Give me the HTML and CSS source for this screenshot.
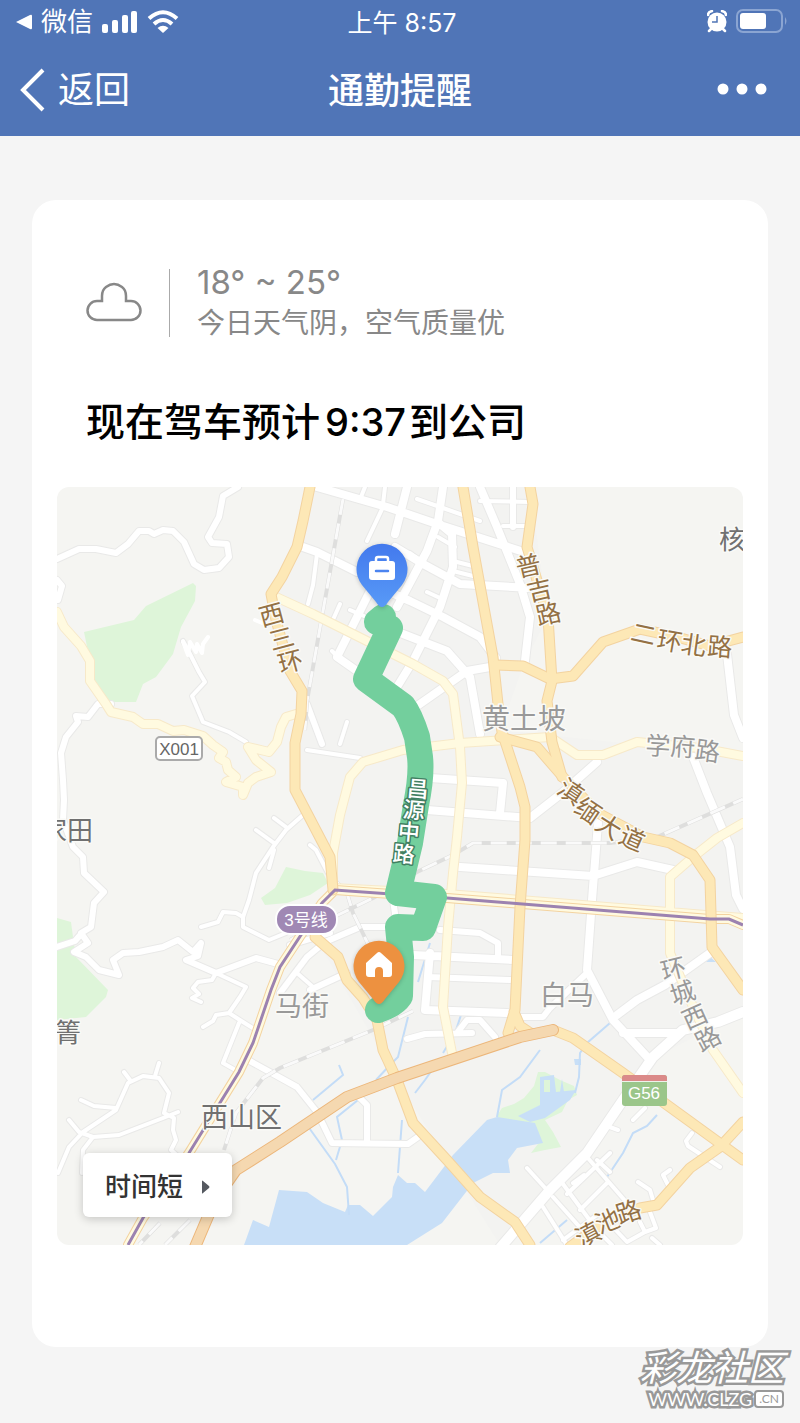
FILE: index.html
```html
<!DOCTYPE html>
<html lang="zh-CN">
<head>
    <meta charset="UTF-8">
    <meta name="viewport" content="width=device-width, initial-scale=1.0">
    <title>通勤提醒</title>
    <link rel="stylesheet" href="styles.css">
</head>
<body>
    <header class="header">
        <div class="status-bar">
            <div class="status-left">
                <svg width="16" height="16" viewBox="0 0 16 16"><path d="M0 8L14 1Q16 0 16 2V14Q16 16 14 15Z" fill="#fff"/></svg>
                <span class="status-app">微信</span>
                <svg class="signal" width="36" height="24" viewBox="0 0 36 24" fill="#fff">
                    <rect x="0" y="14" width="6" height="9" rx="2"/>
                    <rect x="10" y="10" width="6" height="13" rx="2"/>
                    <rect x="20" y="5" width="6" height="18" rx="2"/>
                    <rect x="29" y="1" width="6" height="22" rx="2"/>
                </svg>
                <svg width="32" height="24" viewBox="0 0 32 24" fill="none" stroke="#fff" stroke-width="4">
                    <path d="M2 8.500Q16 -4 30 8.500"/>
                    <path d="M7 14Q16 6 25 14"/>
                    <path d="M16 23L10.500 18Q16 13.500 21.500 18Z" fill="#fff" stroke="none"/>
                </svg>
            </div>
            <div class="status-time">上午 8:57</div>
            <div class="status-right">
                <svg width="20" height="24" viewBox="0 0 20 24">
                    <circle cx="10" cy="12" r="9.500" fill="#fff"/>
                    <path d="M1 5Q1 2 5 1M19 5Q19 2 15 1M4 19L2 21M16 19L18 21" fill="none" stroke="#fff" stroke-width="2.500" stroke-linecap="round"/>
                    <path d="M10 6V12H5" fill="none" stroke="#5075b7" stroke-width="1.500"/>
                </svg>
                <svg width="52" height="26" viewBox="0 0 52 26">
                    <rect x="1" y="1" width="45" height="22" rx="6" fill="none" stroke="#8ba5d2" stroke-width="2"/>
                    <rect x="4" y="4" width="26" height="16" rx="3" fill="#fff"/>
                    <path d="M49 8Q52 12 49 16Z" fill="#8ba5d2"/>
                </svg>
            </div>
        </div>
        <nav class="nav-bar">
            <button class="back-btn" type="button">
                <svg width="25" height="44" viewBox="0 0 25 44"><path d="M23 2L3 22L23 42" fill="none" stroke="#fff" stroke-width="4"/></svg>
                返回
            </button>
            <h1 class="nav-title">通勤提醒</h1>
            <button class="more-btn" type="button" aria-label="更多">
                <svg width="50" height="12" viewBox="0 0 50 12" fill="#fff"><circle cx="6" cy="6" r="5.500"/><circle cx="25" cy="6" r="5.500"/><circle cx="44" cy="6" r="5.500"/></svg>
            </button>
        </nav>
    </header>

    <main class="content">
        <section class="card">
            <div class="weather">
                <svg class="cloud" width="56" height="68" viewBox="0 0 56 68"><path d="M11 32H16V27Q16 21 20 18Q24 15 28 15Q32 15 36 18Q40 21 40 27V32H45A9.500 9.500 0 0 1 45 51H11A9.500 9.500 0 0 1 11 32Z" fill="none" stroke="#888" stroke-width="2.500"/></svg>
                <div class="weather-info">
                    <p class="temperature">18° ~ 25°</p>
                    <p class="weather-desc">今日天气阴，空气质量优</p>
                </div>
            </div>
            <h2 class="eta">现在驾车预计<span class="eta-time">9:37</span>到公司</h2>

            <div class="map">
                <svg class="map-canvas" viewBox="57 487 686 758" role="img" aria-label="通勤路线">
                    <defs>
                        <g id="minor">
                            <path d="M183 641L190 654L199 672L205 682L192 696L203 722L229 732L246 742"/>
                            <path d="M201 927L218 922L223 912L236 913L243 917V927L269 940L286 933M243 917L249 900L256 873L273 847L286 830L303 815M256 830L274 843M274 818L286 827M274 850L269 868"/>
                            <path d="M58 1173L69 1147L83 1132L116 1110L128 1083L143 1076L159 1078L169 1093L164 1113L174 1118L173 1130L176 1140L171 1150L180 1158M81 1100L94 1106L116 1108M124 1072L130 1080M159 1063L155 1076M69 1120L79 1132L93 1137L119 1135L163 1118L178 1112M93 1137L83 1150L82 1173"/>
                            <path d="M216 973L212 980L198 982L193 988L199 994L192 998L201 1002M216 973L246 987L240 997L229 1013L216 1015L213 1021L203 1027M229 1013L243 1022L256 1030M239 1023L223 1063L239 1072"/>
                            <path d="M317 554L313 585L308 604M383 507L367 541M365 487L361 497M385 487L383 504M417 499L443 508L480 521M340 604L332 622M453 561L473 566M453 571L473 576M427 592L440 598M350 610L364 616M503 526H527M480 501L530 502M332 651L338 657M410 553L430 568M438 537L455 547"/>
                            <path d="M307 750L360 758M347 722L340 744M310 845L316 850L328 873M297 973L313 987"/>
                            <path d="M567 1194L610 1153M580 1210L607 1183M563 1240L597 1215M527 1168L547 1190M607 1126L618 1130M720 1167L688 1146L686 1141L692 1133M560 1180L597 1230L612 1245M587 1157L627 1203M543 1207L567 1245M553 1197L585 1233M638 1182L650 1190L653 1200M670 1170L663 1175L668 1185M612 1226L627 1242L645 1232L656 1228L650 1212M645 1232L640 1222M652 1238L660 1245M597 1160L610 1172M573 1183L584 1175M633 1120L645 1108"/>
                        </g>
                        <g id="local">
                            <path d="M57 559L79 549H96L116 553L128 544L139 531H149L154 534L163 530L173 531L184 542L194 564L204 570L219 568L229 557L227 544L212 543L208 537L219 517L223 496L238 487"/>
                            <path d="M57 580L62 586L58 600M111 704H98L88 717L76 716L78 722L66 737L61 753L63 780L64 800L63 820L73 847L83 857L84 873L104 892L94 903L91 927L81 933L88 943L74 952L86 957L99 970L119 975L113 960L123 953L139 952L163 947L178 940L193 952L201 943L198 956L186 960L216 973L256 958L278 964M57 947L75 941L82 933"/>
                            <path d="M248 1060L297 1087L317 1112L332 1143L408 1144L418 1137M367 1142V1105L360 1098"/>
                            <path d="M307 704L322 744M280 993L307 957L325 942L360 927H390M310 990L347 973M290 945L330 933M393 900L396 920"/>
                            <path d="M407 1039L425 1034L472 1033M457 1033L467 1020H480L495 1037M440 930L480 933L498 943V958M427 977L510 980M517 1017H543L550 1008L587 973"/>
                            <path d="M637 1033H673M513 487V527"/>
                        </g>
                        <g id="street">
                            <path d="M310 485L387 507L437 524L530 554M300 546L317 552L357 572M407 487L395 534M443 487L438 521L427 551L397 607M395 547L425 565L460 584L530 588M440 524L452 534L453 567L440 607L413 661L397 687M370 591L337 657L357 671M385 590L410 601L443 617L480 637L496 658M403 634L447 651L470 677L480 734M417 706L467 671L490 667M480 487L497 527L520 584L530 617L525 661"/>
                            <path d="M430 778L503 783L500 813M427 810L530 818L562 793L597 762M460 867L593 876L637 862L673 870M598 823L592 900L587 970L613 1020L650 1060M413 955L513 960M430 953L425 1010L507 1013M693 757L707 793L730 847L736 895L743 909M727 654L734 715L743 738"/>
                            <path d="M623 1033H675M710 953L665 985L637 1000L617 1015"/>
                        </g>
                        <g id="avenue">
                            <path d="M500 1248L550 1190L587 1153L623 1100L653 1057L683 1030L718 1022L743 1012"/>
                        </g>
                        <g id="pale">
                            <path d="M57 612L64 627L81 646L90 661V681L106 704L111 712L133 717L143 724H158L173 731L184 730L203 736L213 745L223 752L219 758L226 762L228 770L236 777L226 782L243 787V795L248 783L256 777L271 772L256 760L248 747L269 752L277 742L281 727L286 717L296 714"/>
                            <path d="M276 597L313 614L347 631L373 644L413 664L443 681L453 694L460 747L462 783L457 837L453 873L448 927L443 1007L452 1053"/>
                            <path d="M333 883V853L340 815L350 777L363 762L403 750L460 743L550 737L577 755H603L637 742L700 748L743 756"/>
                            <path d="M743 823L717 838L693 857L670 877L670 953L690 1000L713 1050L743 1093M333 888L447 894L743 918"/>
                        </g>
                        <g id="main-road">
                            <path d="M310 487L303 521L297 547L282 577L271 594L276 620L290 671L302 691L301 714L295 743V790L307 813L330 857L333 890M315 937L338 957L347 980L363 998L377 1020L383 1050L397 1080L413 1123L447 1160L480 1197L515 1222L530 1245"/>
                            <path d="M463 487L473 547L493 657L498 704L502 732L520 787L525 807V840L520 907L515 1010L508 1033M514 1012L520 1026L532 1034M530 487L533 504L527 547L548 617L552 681L547 701L552 742L562 777"/>
                            <path d="M500 737L537 747L563 777L598 813L643 837L670 843L693 855L710 880L712 947L743 990"/>
                            <path d="M496 665L523 666L550 679L573 676L603 642L640 629L677 637L710 646L743 637"/>
                            <path d="M553 1030L573 1038L623 1073L663 1102L743 1160M743 1122L720 1147L690 1168L657 1205L640 1208L600 1225L570 1247"/>
                        </g>
                        <g id="highway"><path d="M195 1247L215 1200L236 1170L280 1142L347 1097L397 1078L520 1037L553 1030"/></g>
                        <g id="railway"><path d="M343 499L323 611L307 701L305 730M290 940L338 915L375 897L417 872L453 855L473 843H610L657 837L743 799M413 1011L373 1030L280 1068L263 1078L236 1113L224 1150M328 873L347 893L353 913L370 948M160 1223L139 1245M190 1220L165 1245"/></g>
                        <path id="metro" d="M743 925L729 919H710L510 903L447 898L335 890L322 903L280 967L271 990L253 1043L239 1072L189 1153L143 1218L128 1245"/>
                        <linearGradient id="company-fill" x1="0" y1="0" x2="0" y2="1"><stop offset="0" stop-color="#4379ed"/><stop offset="1" stop-color="#589af7"/></linearGradient>
                    </defs>

                    <rect class="land" x="57" y="487" width="686" height="758"/>
                    <!-- city blocks -->
                    <path class="blocks" d="M310 487H530L548 617L525 661L500 730L743 756V1012L650 1060L587 1153L500 1245L447 1160L397 1080L315 937L335 890L295 790L302 691L276 597Z"/>

                    <!-- parks -->
                    <g class="park">
                        <path d="M84 632L134 620L146 606L193 583L196 586L195 601L181 627L173 654L156 677L143 684L136 702H109L90 681V661Z"/>
                        <path d="M57 918L71 922L73 937L76 957L108 990L106 997L86 1017L57 1020Z"/>
                        <path d="M261 898L275 888L286 867L305 871L323 873L328 883L310 895L287 903L265 905Z"/>
                        <path d="M496 1117L502 1108L514 1104L524 1098L534 1086L538 1072L545 1072L560 1080L574 1086L577 1095L568 1100L562 1112L545 1120L553 1132L561 1147L545 1150L531 1153L541 1140L515 1122Z"/>
                    </g>

                    <!-- lake and rivers -->
                    <g class="water">
                        <path d="M244 1245L253 1220L269 1227L279 1190L307 1192L323 1203L345 1212L348 1205H360L373 1216L392 1197L393 1187L398 1175L407 1183H415L425 1192L453 1155L487 1120L497 1117L535 1123L543 1143L517 1148L508 1160L510 1173L493 1173L473 1183L442 1223L407 1245Z"/>
                        <path fill-rule="evenodd" d="M518 1116L540 1105V1077L554 1075L556 1092L576 1090L570 1100L545 1118L530 1122ZM544 1080V1092H550V1080Z"/>
                        <path d="M562 1079L564 1092L560 1092ZM706 962L710 957L716 962ZM574 1059H581V1065H575Z"/>
                    </g>
                    <path class="river" d="M408 1017L398 1057L390 1065L376 1080M307 1125L335 1164L347 1187L349 1215M402 1120L398 1173M358 1100L337 1117L342 1140L336 1160M437 1063L425 1080L415 1093M610 1023L587 1043L580 1053L579 1077L575 1093M657 1115L647 1126L633 1133L623 1153L607 1177M540 1243L567 1220M430 943L418 982M339 1065L343 1075L313 1100M461 1015L455 1033L443 1053M497 1117L502 1090L520 1077L540 1050"/>

                    <!-- roads: casing first, then fill -->
                    <use href="#minor" class="road casing w6"/><use href="#local" class="road casing w8"/>
                    <use href="#street" class="road casing w10"/><use href="#avenue" class="road casing w12"/>
                    <use href="#minor" class="road white w4"/><use href="#local" class="road white w6"/>
                    <use href="#street" class="road white w8"/><use href="#avenue" class="road white w10"/>
                    <path class="road white w4" d="M183 642L188 655L190 642L196 652L197 644L202 653L203 644L208 637M255 620L262 623"/>
                    <use href="#railway" class="rail-bed"/><use href="#railway" class="rail-dash"/>
                    <use href="#pale" class="road pale-edge w10"/><use href="#pale" class="road pale w8"/>
                    <use href="#metro" class="road main-edge w10"/><use href="#metro" class="road pale w8"/>
                    <use href="#main-road" class="road main-edge w11"/><use href="#main-road" class="road main w9"/>
                    <use href="#highway" class="road highway-edge w12"/><use href="#highway" class="road highway w10"/>
                    <use href="#metro" class="metro"/>

                    <!-- place names -->
                    <g class="place">
                        <text x="482" y="729" font-size="28">黄土坡</text>
                        <text x="275" y="1016">马街</text>
                        <text x="540" y="1005">白马</text>
                    </g>
                    <g class="place dark">
                        <text x="719" y="549" font-size="26">核</text>
                        <text x="41" y="840" font-size="26">家田</text>
                        <text x="55" y="1042" font-size="26">箐</text>
                        <text x="201" y="1127">西山区</text>
                    </g>
                    <g class="road-name">
                        <text transform="translate(271 613) rotate(-15)">西</text>
                        <text transform="translate(281 637) rotate(-15)">三</text>
                        <text transform="translate(290 660) rotate(-15)">环</text>
                        <text transform="translate(528 564) rotate(-13)">普</text>
                        <text transform="translate(539 588) rotate(-13)">吉</text>
                        <text transform="translate(548 612) rotate(-13)">路</text>
                        <text transform="translate(644 632) rotate(12)">二</text>
                        <text transform="translate(670 639) rotate(10)">环</text>
                        <text transform="translate(694 643) rotate(8)">北</text>
                        <text transform="translate(720 645) rotate(4)">路</text>
                        <text transform="translate(572 790) rotate(34)">滇</text>
                        <text transform="translate(589 809) rotate(34)">缅</text>
                        <text transform="translate(610 825) rotate(32)">大</text>
                        <text transform="translate(633 837) rotate(24)">道</text>
                        <text transform="translate(587 1233) rotate(-28)">滇</text>
                        <text transform="translate(607 1219) rotate(-22)">池</text>
                        <text transform="translate(628 1210) rotate(-18)">路</text>
                    </g>
                    <g class="road-name gray">
                        <text transform="translate(658 744) rotate(3)">学</text>
                        <text transform="translate(683 745) rotate(4)">府</text>
                        <text transform="translate(708 749) rotate(8)">路</text>
                        <text transform="translate(673 967) rotate(-14)">环</text>
                        <text transform="translate(682 991) rotate(-18)">城</text>
                        <text transform="translate(694 1015) rotate(-24)">西</text>
                        <text transform="translate(707 1037) rotate(-28)">路</text>
                    </g>

                    <!-- road number shields -->
                    <rect x="156" y="737" width="46" height="23" rx="4" fill="#fff" stroke="#aaa" stroke-width="2"/>
                    <text class="shield" x="179" y="755" fill="#666">X001</text>
                    <rect x="276" y="905" width="61" height="29" rx="14" fill="#a088b4" stroke="#fff" stroke-width="2"/>
                    <text class="shield" x="306" y="926" fill="#fff">3号线</text>
                    <rect x="622" y="1075" width="45" height="31" rx="3" fill="#9bc68a"/>
                    <path d="M622 1081V1078Q622 1075 625 1075H664Q667 1075 667 1078V1081Z" fill="#db8a89"/>
                    <path d="M622 1081.500H667" stroke="#eef3ea"/>
                    <text class="shield" x="644" y="1099" fill="#fff">G56</text>

                    <!-- route -->
                    <path class="route" d="M383 617L377 622L390 628L366 679L403 706Q410 715 417 737L420 757Q422 775 416 805L410 843L398 893L434 897L423 928L398 927L401 957L400 996Q394 1005 378 1010"/>
                    <g class="route-name">
                        <text transform="translate(418 787) rotate(5)">昌</text>
                        <text transform="translate(414 808) rotate(5)">源</text>
                        <text transform="translate(409 830) rotate(5)">中</text>
                        <text transform="translate(404 852) rotate(5)">路</text>
                    </g>

                    <!-- pins -->
                    <g class="pin">
                        <path d="M382 607Q379 607 376 602L362 585A25.500 25.500 0 1 1 402 585L388 602Q385 607 382 607Z" fill="url(#company-fill)"/>
                        <path d="M376 562V559Q376 557 378 557H386Q388 557 388 559V562" fill="none" stroke="#fff" stroke-width="2.500"/>
                        <rect x="369" y="561" width="26" height="19" rx="3" fill="#fff"/>
                        <path d="M376 571H388" stroke="#4b84f0" stroke-width="2.500" stroke-linecap="round"/>
                    </g>
                    <g class="pin">
                        <path d="M379 1004Q376 1004 373 999L359 982A25.500 25.500 0 1 1 399 982L385 999Q382 1004 379 1004Z" fill="#ed9140"/>
                        <path d="M366 963L377 953Q379 951 381 953L392 963V974Q392 977 389 977H383V971Q383 967 379 967Q375 967 375 971V977H369Q366 977 366 974Z" fill="#fff"/>
                    </g>
                </svg>
                <button class="route-btn" type="button">
                    时间短
                    <svg width="9" height="14" viewBox="0 0 9 14"><path d="M1 1Q1 0 2 1L8 6Q9 7 8 8L2 13Q1 14 1 13Z" fill="#555960"/></svg>
                </button>
            </div>
        </section>
    </main>

    <footer class="watermark">
        <span class="watermark-name">彩龙社区</span>
        <span class="watermark-url">WWW.CLZG<span class="watermark-cn">.CN</span></span>
    </footer>
</body>
</html>
```

FILE: styles.css
```css
* {
    margin: 0;
    padding: 0;
    box-sizing: border-box;
}

body {
    position: relative;
    min-height: 100vh;
    font-family: Inter, 'Noto Sans CJK SC', sans-serif;
    background-color: #f5f5f5;
}

button {
    border: none;
    background: none;
    font-family: inherit;
    cursor: pointer;
}

svg {
    display: block;
    flex: none;
}

/* header */
.header {
    background-color: #5075b7;
    color: #fff;
}

.status-bar,
.nav-bar {
    display: grid;
    grid-template-columns: 1fr auto 1fr;
    align-items: center;
}

.status-bar {
    height: 44px;
    padding: 0 12px 0 16px;
    font-size: 25px;
    line-height: 36px;
}

.status-left,
.status-right {
    display: flex;
    align-items: center;
    gap: 9px;
}

.status-right {
    justify-content: flex-end;
}

.status-app {
    font-size: 26px;
}

.status-time {
    padding-top: 2px;
}

.nav-bar {
    height: 92px;
    padding: 0 20px;
    font-size: 36px;
    line-height: 52px;
}

.back-btn {
    display: flex;
    align-items: center;
    gap: 13px;
    color: #fff;
    font-size: 36px;
    line-height: 48px;
}

.nav-title {
    padding-top: 2px;
    font-size: 36px;
    font-weight: 500;
}

.more-btn {
    justify-self: end;
    padding: 0 13px 2px;
    color: #fff;
}

/* card */
.content {
    padding: 64px 32px 76px;
}

.card {
    padding: 64px 25px 102px;
    border-radius: 24px;
    background-color: #fff;
}

.weather {
    display: flex;
    align-items: center;
    gap: 27px;
    padding: 0 29px;
    color: #888;
}

.weather-info {
    position: relative;
    padding-left: 28px;
}

.weather-info::before {
    content: '';
    position: absolute;
    left: 0;
    top: 5px;
    bottom: 5px;
    width: 1px;
    background-color: #aaa;
}

.temperature {
    font-size: 33px;
    line-height: 36px;
}

.weather-desc {
    padding-top: 4px;
    font-size: 28px;
    line-height: 38px;
}

.eta {
    padding: 0 29px;
    margin: 51px 0 36px;
    color: #000;
    font-size: 39px;
    font-weight: 500;
    line-height: 58px;
}

.eta-time {
    margin: 0 3px 0 5px;
    font-size: 38px;
}

/* map */
.map {
    position: relative;
    overflow: hidden;
    border-radius: 12px;
}

.map-canvas {
    width: 100%;
    height: auto;
    font-family: 'Noto Sans CJK SC', sans-serif;
}

.land { fill: #f5f5f2; }
.blocks { fill: #f3f3f1; }
.park { fill: #def5d9; }
.water { fill: #c8dff7; }

.river {
    fill: none;
    stroke: #c3dcf7;
    stroke-width: 2;
}

.road {
    fill: none;
    stroke-linecap: round;
    stroke-linejoin: round;
}

.w4 { stroke-width: 4px; }
.w6 { stroke-width: 6px; }
.w8 { stroke-width: 8px; }
.w9 { stroke-width: 9px; }
.w10 { stroke-width: 10px; }
.w11 { stroke-width: 11px; }
.w12 { stroke-width: 12px; }

.casing { stroke: #e9e9e8; }
.white { stroke: #fff; }
.pale-edge { stroke: #f7e9c9; }
.pale { stroke: #fffae0; }
.main-edge { stroke: #f3d3a0; }
.main { stroke: #fde8b6; }
.highway-edge { stroke: #ecb67a; }
.highway { stroke: #f5d8b0; }

.rail-bed {
    fill: none;
    stroke: #dededd;
    stroke-width: 4;
}

.rail-dash {
    fill: none;
    stroke: #fafafa;
    stroke-width: 3;
    stroke-dasharray: 16 9;
}

.metro {
    fill: none;
    stroke: #9c82b0;
    stroke-width: 3;
}

.place,
.road-name {
    paint-order: stroke;
    stroke: #fafaf7;
    stroke-width: 3;
    stroke-linejoin: round;
}

.place {
    fill: #999;
    font-size: 27px;
}

.place.dark {
    fill: #707070;
}

.road-name {
    fill: #947144;
    font-size: 25px;
}

.road-name.gray {
    fill: #999;
}

.road-name text,
.route-name text {
    text-anchor: middle;
    dominant-baseline: central;
}

.shield {
    font-family: 'Liberation Sans', 'Noto Sans CJK SC', sans-serif;
    font-size: 17px;
    text-anchor: middle;
}

.route {
    fill: none;
    stroke: #73cf9d;
    stroke-width: 26;
    stroke-linecap: round;
    stroke-linejoin: round;
}

.route-name {
    fill: #fff;
    font-size: 22px;
    font-weight: 500;
    paint-order: stroke;
    stroke: #417f62;
    stroke-width: 3;
    stroke-linejoin: round;
}

.pin {
    filter: drop-shadow(0 1px 2px rgba(0, 0, 0, 0.2));
}

.route-btn {
    position: absolute;
    left: 26px;
    bottom: 28px;
    display: flex;
    align-items: center;
    gap: 18px;
    padding: 14px 22px 10px;
    border-radius: 6px;
    background-color: #fff;
    box-shadow: 0 2px 10px rgba(0, 0, 0, 0.2);
    color: #333;
    font-size: 26px;
    font-weight: 500;
    line-height: 40px;
}

/* watermark */
.watermark {
    position: absolute;
    right: 16px;
    bottom: 13px;
    display: flex;
    flex-direction: column;
    align-items: flex-end;
    color: #fff;
    -webkit-text-stroke: 5px #999;
    paint-order: stroke fill;
    stroke-linejoin: round;
}

.watermark-name {
    font-size: 36px;
    font-style: italic;
    line-height: 40px;
}

.watermark-url {
    display: flex;
    align-items: center;
    gap: 2px;
    font-family: Lato, sans-serif;
    font-size: 18px;
    line-height: 22px;
}

.watermark-cn {
    padding: 0 3px;
    border: 2px solid #999;
    border-radius: 4px;
    background-color: #fff;
    color: #999;
    font-size: 12px;
    line-height: 14px;
    -webkit-text-stroke: 0;
}
```
